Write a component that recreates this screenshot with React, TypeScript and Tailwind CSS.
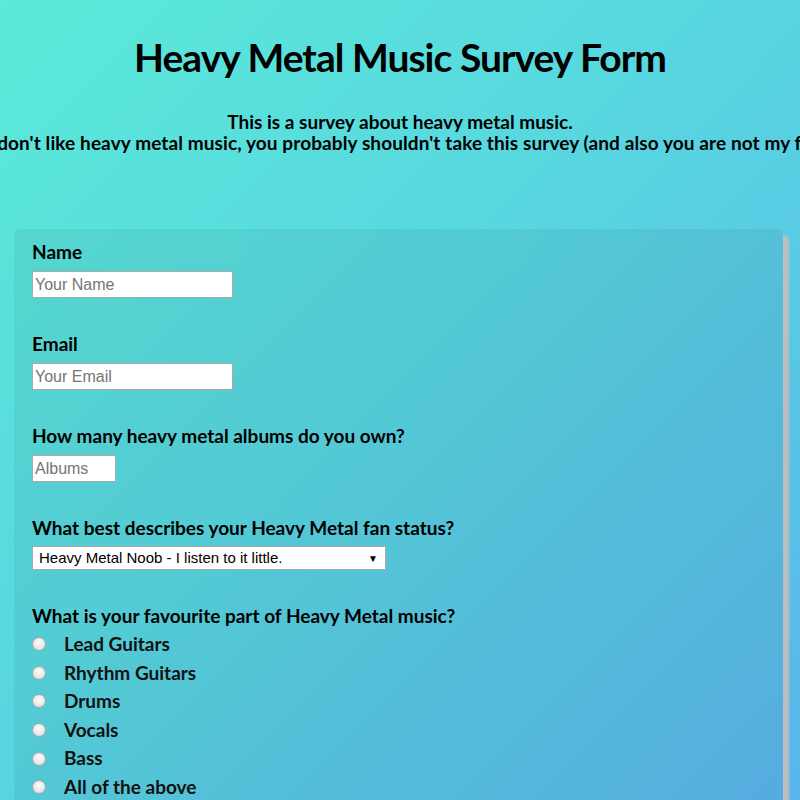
import React from "react";

const font = { fontFamily: "Lato, 'Open Sans', sans-serif" };
const arial = { fontFamily: "'Liberation Sans', Arial, sans-serif" };

const Radio = ({ label }: { label: string }) => (
  <label className="flex items-center h-[28.6px]">
    <span className="w-[14px] h-[14px] rounded-full border border-[#a8a8a8] bg-[radial-gradient(circle_at_50%_40%,#ffffff,#d6d6d6)] mr-[18px] shrink-0" />
    <span className="text-[19px] font-bold text-[#111]">{label}</span>
  </label>
);

export default function App() {
  return (
    <div
      className="min-h-screen w-full overflow-hidden bg-[linear-gradient(135deg,#5aead8_0%,#58d6e0_45%,#5ab4ec_100%)] text-black"
      style={font}
    >
      <div className="flex flex-col items-center">
        <h1 className="mt-[30px] text-[39px] leading-[54px] font-bold tracking-tight">
          Heavy Metal Music Survey Form
        </h1>
        <p className="mt-[27px] text-[19px] leading-[21px] font-bold whitespace-nowrap text-center">
          This is a survey about heavy metal music.
        </p>
        <p className="text-[19px] leading-[21px] font-bold whitespace-nowrap text-center tracking-[0.1px]">
          If you don't like heavy metal music, you probably shouldn't take this survey (and also you are not my friend).
        </p>
      </div>

      <form className="mt-[76px] ml-[14px] w-[769px] rounded-[6px] bg-black/[0.05] shadow-[6px_6px_2px_rgba(190,190,190,1)] pl-[18px] pt-[10px] pb-10">
        <div className="mb-[33px]">
          <label className="block text-[19px] font-bold leading-[26px] mb-[6px]">Name</label>
          <input
            placeholder="Your Name"
            className="w-[201px] h-[27px] bg-white border border-[#a9a9a9] px-[2px] text-[16px] placeholder:text-[#757575]"
            style={arial}
          />
        </div>
        <div className="mb-[33px]">
          <label className="block text-[19px] font-bold leading-[26px] mb-[6px]">Email</label>
          <input
            placeholder="Your Email"
            className="w-[201px] h-[27px] bg-white border border-[#a9a9a9] px-[2px] text-[16px] placeholder:text-[#757575]"
            style={arial}
          />
        </div>
        <div className="mb-[33px]">
          <label className="block text-[19px] font-bold leading-[26px] mb-[6px]">
            How many heavy metal albums do you own?
          </label>
          <input
            placeholder="Albums"
            className="w-[84px] h-[27px] bg-white border border-[#a9a9a9] px-[2px] text-[16px] placeholder:text-[#757575]"
            style={arial}
          />
        </div>
        <div className="mb-[33px]">
          <label className="block text-[19px] font-bold leading-[26px] mb-[5px]">
            What best describes your Heavy Metal fan status?
          </label>
          <div
            className="w-[354px] h-[24px] bg-white border border-[#a9a9a9] flex items-center justify-between pl-[6px] pr-[7px] text-[15px]"
            style={arial}
          >
            <span>Heavy Metal Noob - I listen to it little.</span>
            <span className="text-[10px]">▼</span>
          </div>
        </div>
        <div>
          <label className="block text-[19px] font-bold leading-[26px] mb-[1px]">
            What is your favourite part of Heavy Metal music?
          </label>
          <Radio label="Lead Guitars" />
          <Radio label="Rhythm Guitars" />
          <Radio label="Drums" />
          <Radio label="Vocals" />
          <Radio label="Bass" />
          <Radio label="All of the above" />
        </div>
      </form>
    </div>
  );
}
